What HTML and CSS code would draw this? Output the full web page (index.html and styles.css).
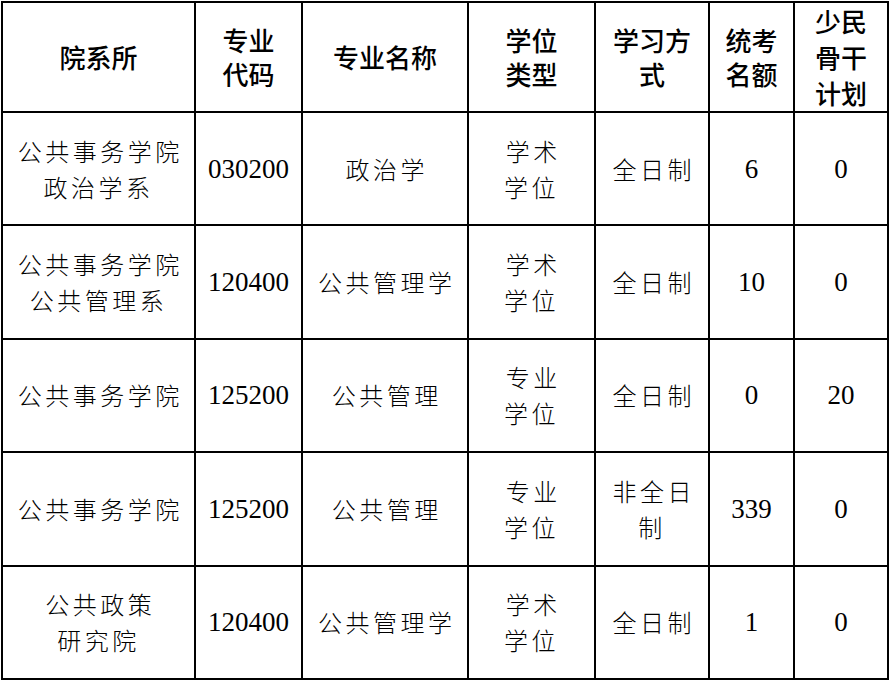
FILE: index.html
```html
<!DOCTYPE html>
<html lang="zh-CN">
<head>
<meta charset="utf-8">
<link rel="stylesheet" href="styles.css">
</head>
<body>
<table class="grid">
  <colgroup>
    <col class="c1"><col class="c2"><col class="c3"><col class="c4"><col class="c5"><col class="c6"><col class="c7">
  </colgroup>
  <thead>
    <tr class="head">
      <th>院系所</th>
      <th>专业<br>代码</th>
      <th>专业名称</th>
      <th>学位<br>类型</th>
      <th>学习方<br>式</th>
      <th>统考<br>名额</th>
      <th class="tall">少民<br>骨干<br>计划</th>
    </tr>
  </thead>
  <tbody>
    <tr>
      <td class="zh">公共事务学院<br>政治学系</td>
      <td><span class="num">030200</span></td>
      <td class="zh">政治学</td>
      <td class="zh">学术<br>学位</td>
      <td class="zh">全日制</td>
      <td><span class="num">6</span></td>
      <td><span class="num">0</span></td>
    </tr>
    <tr>
      <td class="zh">公共事务学院<br>公共管理系</td>
      <td><span class="num">120400</span></td>
      <td class="zh">公共管理学</td>
      <td class="zh">学术<br>学位</td>
      <td class="zh">全日制</td>
      <td><span class="num">10</span></td>
      <td><span class="num">0</span></td>
    </tr>
    <tr>
      <td class="zh">公共事务学院</td>
      <td><span class="num">125200</span></td>
      <td class="zh">公共管理</td>
      <td class="zh">专业<br>学位</td>
      <td class="zh">全日制</td>
      <td><span class="num">0</span></td>
      <td><span class="num">20</span></td>
    </tr>
    <tr>
      <td class="zh">公共事务学院</td>
      <td><span class="num">125200</span></td>
      <td class="zh">公共管理</td>
      <td class="zh">专业<br>学位</td>
      <td class="zh">非全日<br>制</td>
      <td><span class="num">339</span></td>
      <td><span class="num">0</span></td>
    </tr>
    <tr>
      <td class="zh">公共政策<br>研究院</td>
      <td><span class="num">120400</span></td>
      <td class="zh">公共管理学</td>
      <td class="zh">学术<br>学位</td>
      <td class="zh">全日制</td>
      <td><span class="num">1</span></td>
      <td><span class="num">0</span></td>
    </tr>
  </tbody>
</table>
</body>
</html>
```
FILE: styles.css
```css
html, body {
  margin: 0;
  padding: 0;
  background: #fff;
}
body {
  padding: 1px 0 0 1px;
}
.grid {
  border-collapse: collapse;
  table-layout: fixed;
  width: 888px;
  color: #000;
}
.c1 { width: 193px; }
.c2 { width: 107px; }
.c3 { width: 166px; }
.c4 { width: 127px; }
.c5 { width: 114px; }
.c6 { width: 85px; }
.c7 { width: 94px; }
.grid th, .grid td {
  border: 2px solid #000;
  padding: 0;
  text-align: center;
  vertical-align: middle;
}
.head th {
  height: 108px;
  font-family: "Noto Sans CJK SC", sans-serif;
  font-weight: 500;
  font-size: 26px;
  line-height: 34px;
}
.head th.tall {
  line-height: 36px;
}
.grid tbody td {
  height: 111.4px;
}
.zh {
  font-family: "Noto Sans CJK SC", sans-serif;
  font-weight: 300;
  font-size: 24px;
  letter-spacing: 3.5px;
  text-indent: 3.5px;
  line-height: 36px;
}
.num {
  font-family: "Liberation Serif", serif;
  font-weight: 400;
  font-size: 27px;
  line-height: 36px;
}
```
